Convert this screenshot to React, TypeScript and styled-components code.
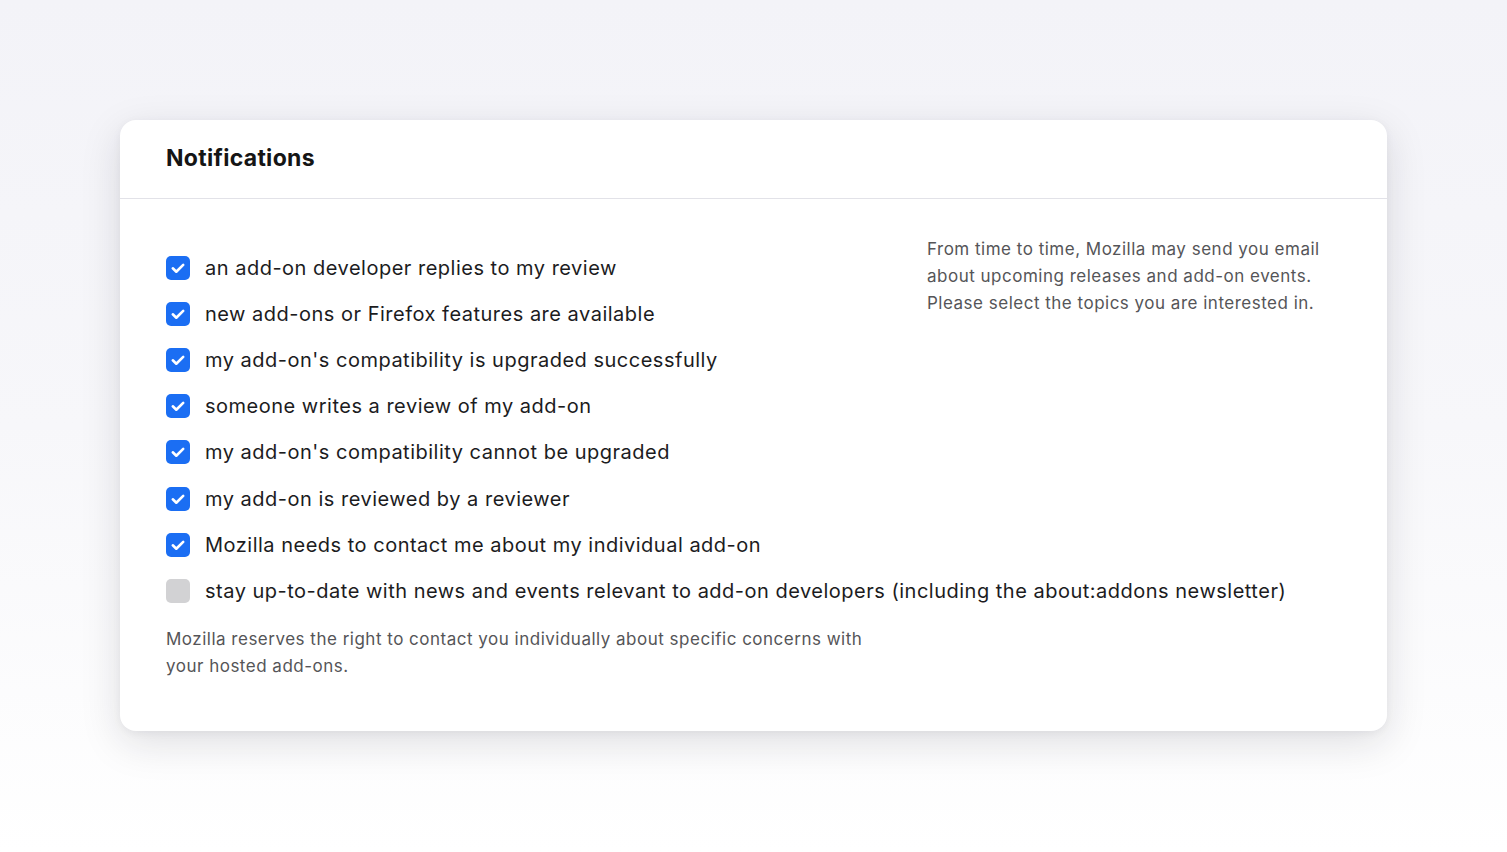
import React, { useState } from "react";
import styled, { createGlobalStyle } from "styled-components";

const GlobalStyle = createGlobalStyle`
  html, body {
    margin: 0;
    padding: 0;
  }
  body {
    font-family: Inter, "Noto Sans", "Liberation Sans", sans-serif;
    background: linear-gradient(180deg, #f3f3f8 0%, #f7f7fa 50%, #ffffff 100%);
    min-height: 852px;
  }
`;

const options = [
  { id: "reply", label: "an add-on developer replies to my review", checked: true },
  { id: "new", label: "new add-ons or Firefox features are available", checked: true },
  { id: "upgraded", label: "my add-on's compatibility is upgraded successfully", checked: true },
  { id: "review", label: "someone writes a review of my add-on", checked: true },
  { id: "failed", label: "my add-on's compatibility cannot be upgraded", checked: true },
  { id: "reviewed", label: "my add-on is reviewed by a reviewer", checked: true },
  { id: "contact", label: "Mozilla needs to contact me about my individual add-on", checked: true },
  {
    id: "news",
    label:
      "stay up-to-date with news and events relevant to add-on developers (including the about:addons newsletter)",
    checked: false,
  },
];

const App = () => {
  const [state, setState] = useState(options);

  const toggle = (id: string) => {
    setState((prev) =>
      prev.map((o) => (o.id === id ? { ...o, checked: !o.checked } : o))
    );
  };

  return (
    <Page>
      <GlobalStyle />
      <Card>
        <Header>
          <Title>Notifications</Title>
        </Header>
        <Body>
          <Aside>
            From time to time, Mozilla may send you email about upcoming
            releases and add-on events. Please select the topics you are
            interested in.
          </Aside>
          <List>
            {state.map((item) => (
              <Row key={item.id} onClick={() => toggle(item.id)}>
                <Box $checked={item.checked}>
                  {item.checked && (
                    <svg width="16" height="16" viewBox="0 0 16 16" fill="none">
                      <path
                        d="M2.8 8.3l3.5 3.4L13.2 4.9"
                        stroke="#fff"
                        strokeWidth="2.6"
                        strokeLinecap="round"
                        strokeLinejoin="round"
                      />
                    </svg>
                  )}
                </Box>
                <Label>{item.label}</Label>
              </Row>
            ))}
          </List>
          <Note>
            Mozilla reserves the right to contact you individually about
            specific concerns with your hosted add-ons.
          </Note>
        </Body>
      </Card>
    </Page>
  );
};

const Page = styled.div`
  padding: 120px 120px 0;
`;

const Card = styled.div`
  background: #fff;
  border-radius: 16px;
  box-shadow: 0 12px 40px rgba(20, 20, 40, 0.13), 0 2px 8px rgba(20, 20, 40, 0.05);
  overflow: hidden;
`;

const Header = styled.div`
  height: 79px;
  display: flex;
  align-items: center;
  padding: 0 46px 3px;
  box-sizing: border-box;
  border-bottom: 1px solid #e2e2e8;
`;

const Title = styled.h2`
  margin: 0;
  font-size: 23px;
  font-weight: 700;
  color: #151515;
  letter-spacing: 0.3px;
`;

const Body = styled.div`
  padding: 37px 46px 51px;
`;

const Aside = styled.p`
  float: right;
  width: 414px;
  margin: 0;
  font-size: 17px;
  line-height: 27px;
  letter-spacing: 0.5px;
  color: #555558;
`;

const List = styled.div`
  padding-top: 9px;
`;

const Row = styled.label`
  display: flex;
  align-items: center;
  height: 46.1px;
  gap: 15px;
  cursor: pointer;
`;

const Box = styled.span<{ $checked: boolean }>`
  flex: none;
  width: 24px;
  height: 24px;
  border-radius: 5px;
  display: flex;
  align-items: center;
  justify-content: center;
  background: ${(p) => (p.$checked ? "#1b6ef3" : "#d2d2d4")};
`;

const Label = styled.span`
  font-size: 20px;
  letter-spacing: 0.5px;
  color: #1c1c1e;
  white-space: nowrap;
`;

const Note = styled.p`
  clear: both;
  max-width: 700px;
  margin: 12px 0 0;
  font-size: 17px;
  line-height: 27px;
  letter-spacing: 0.5px;
  color: #555558;
`;

export default App;
